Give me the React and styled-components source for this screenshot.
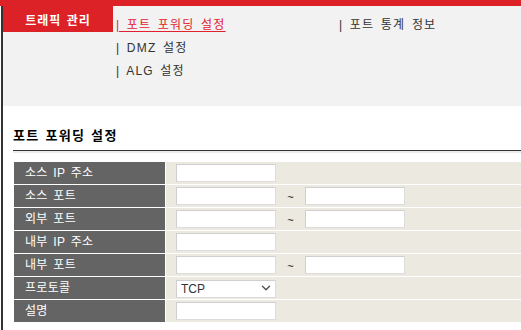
import React from 'react'
import styled, { createGlobalStyle } from 'styled-components'
import { ChevronDown } from 'lucide-react'

const GlobalStyle = createGlobalStyle`
  html, body {
    margin: 0;
    padding: 0;
    background: #fff;
    overflow: hidden;
  }
  body {
    font-family: "Liberation Sans", "Noto Sans CJK KR", sans-serif;
  }
`

const Page = styled.div`
  width: 521px;
  height: 330px;
  overflow: hidden;
  display: flex;
  flex-direction: column;
`

const TopBar = styled.div`
  height: 6px;
  flex-shrink: 0;
  background-color: #dc2127;
`

const Frame = styled.div`
  flex: 1;
  margin-left: 1px;
  border-left: 2px solid #333;
  display: flex;
  flex-direction: column;
`

const Header = styled.div`
  height: 100px;
  display: flex;
  align-items: flex-start;
  background-color: #f2f2f2;
`

const Tab = styled.div`
  width: 110px;
  height: 26px;
  flex-shrink: 0;
  display: flex;
  align-items: center;
  justify-content: center;
  background-color: #dd2227;
  color: #fff;
  font-size: 12px;
  font-weight: 700;
  letter-spacing: 1px;
  word-spacing: 1px;
`

const Menu = styled.ul`
  margin: 0 0 0 3px;
  padding: 8px 0 0;
  list-style: none;
  display: grid;
  grid-template-columns: 223px auto;
  grid-auto-rows: 23px;
`

const MenuItem = styled.li`
  line-height: 23px;
  font-size: 12px;
  letter-spacing: 1.2px;
  word-spacing: 2px;
  white-space: nowrap;
  color: ${({ $active }) => ($active ? '#e3212d' : '#333')};
  text-decoration: ${({ $active }) => ($active ? 'underline' : 'none')};
  text-underline-offset: 2px;
`

const Content = styled.section`
  padding: 20px 0 0 10px;
`

const Title = styled.h3`
  margin: 0;
  height: 20px;
  padding-bottom: 4px;
  line-height: 20px;
  font-size: 13px;
  font-weight: 700;
  letter-spacing: 1.3px;
  word-spacing: 1px;
  color: #000;
  border-bottom: 1px solid #333;
  box-shadow: 0 2px 0 #ececec;
`

const Table = styled.div`
  margin-top: 10px;
  padding: 1px 0 1px 1px;
  display: grid;
  grid-template-columns: 151px 1fr;
  grid-auto-rows: 22px;
  gap: 1px;
  background-color: #fff;
`

const Label = styled.div`
  padding-left: 11px;
  line-height: 22px;
  font-size: 12px;
  letter-spacing: 0.3px;
  word-spacing: 2px;
  color: #fff;
  background-color: #646464;
  white-space: nowrap;
`

const Value = styled.div`
  display: flex;
  align-items: center;
  padding-left: 10px;
  background-color: #eceae0;
`

const Input = styled.input`
  box-sizing: border-box;
  width: 100px;
  height: 18px;
  margin: 0;
  padding: 0 4px;
  border: 1px solid #dcdcdc;
  border-top-color: #cfcfcf;
  border-left-color: #cfcfcf;
  background: #fff;
  font-family: inherit;
  font-size: 12px;
  outline: none;
`

const Tilde = styled.span`
  width: 29px;
  padding-top: 2px;
  text-align: center;
  font-size: 11px;
  color: #111;
`

const SelectWrap = styled.div`
  position: relative;
  width: 100px;
  height: 18px;
`

const Select = styled.select`
  box-sizing: border-box;
  width: 100%;
  height: 100%;
  margin: 0;
  padding: 0 0 0 4px;
  appearance: none;
  border: 1px solid #dcdcdc;
  border-top-color: #cfcfcf;
  border-left-color: #cfcfcf;
  background: #fff;
  font-family: inherit;
  font-size: 12px;
  color: #333;
  outline: none;
`

const Chevron = styled(ChevronDown)`
  position: absolute;
  right: 3px;
  top: 2px;
  color: #555;
  pointer-events: none;
`

const rows = [
  { label: '소스 IP 주소', range: false },
  { label: '소스 포트', range: true },
  { label: '외부 포트', range: true },
  { label: '내부 IP 주소', range: false },
  { label: '내부 포트', range: true },
  { label: '프로토콜', select: true },
  { label: '설명', range: false },
]

const App = () => {
  return (
    <Page>
      <GlobalStyle />
      <TopBar />
      <Frame>
        <Header>
          <Tab>트래픽 관리</Tab>
          <Menu>
            <MenuItem $active>| 포트 포워딩 설정</MenuItem>
            <MenuItem>| 포트 통계 정보</MenuItem>
            <MenuItem>| DMZ 설정</MenuItem>
            <MenuItem />
            <MenuItem>| ALG 설정</MenuItem>
          </Menu>
        </Header>
        <Content>
          <Title>포트 포워딩 설정</Title>
          <Table>
            {rows.map((row) => (
              <React.Fragment key={row.label}>
                <Label>{row.label}</Label>
                <Value>
                  {row.select ? (
                    <SelectWrap>
                      <Select defaultValue="TCP">
                        <option>TCP</option>
                        <option>UDP</option>
                        <option>TCP/UDP</option>
                      </Select>
                      <Chevron size={14} strokeWidth={2.5} />
                    </SelectWrap>
                  ) : (
                    <Input />
                  )}
                  {row.range && (
                    <>
                      <Tilde>~</Tilde>
                      <Input />
                    </>
                  )}
                </Value>
              </React.Fragment>
            ))}
          </Table>
        </Content>
      </Frame>
    </Page>
  )
}

export default App
